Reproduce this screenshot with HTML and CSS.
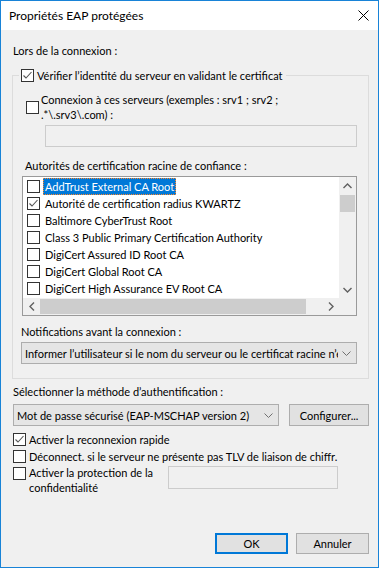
FILE: index.html
```html
<!doctype html>
<html lang="fr">
  <head>
    <meta charset="UTF-8" />
    <title>Propriétés EAP protégées</title>
    <link rel="stylesheet" href="styles.css">
  </head>
  <body>
    <div class="window">
      <div class="titlebar">
        <span class="title">Propriétés EAP protégées</span>
        <svg class="close" width="11" height="11" viewBox="0 0 11 11">
          <path d="M0.5 0.5 L10.5 10.5 M10.5 0.5 L0.5 10.5" stroke="#000" stroke-width="1" fill="none" />
        </svg>
      </div>

      <div class="content">
        <div class="label">Lors de la connexion :</div>

        <fieldset class="group">
          <legend class="check-row">
            <span class="cb checked"><svg width="11" height="11" viewBox="0 0 11 11"><path d="M1.5 5.5 L4 8 L9.5 2" stroke="#555" stroke-width="1.1" fill="none" /></svg></span>
            <span>Vérifier l’identité du serveur en validant le certificat</span>
          </legend>

          <div class="check-row servers">
            <span class="cb"></span>
            <span>Connexion à ces serveurs (exemples : srv1 ; srv2 ;<br>.*\.srv3\.com) :</span>
          </div>
          <div class="textbox servers-box"></div>

          <div class="label ca-label">Autorités de certification racine de confiance :</div>
          <div class="listbox">
            <div class="list-main">
              <div class="rows">
                <div class="row"><span class="cb"></span><span class="item selected">AddTrust External CA Root</span></div>
                <div class="row"><span class="cb checked"><svg width="11" height="11" viewBox="0 0 11 11"><path d="M1.5 5.5 L4 8 L9.5 2" stroke="#555" stroke-width="1.1" fill="none" /></svg></span><span class="item">Autorité de certification radius KWARTZ</span></div>
                <div class="row"><span class="cb"></span><span class="item">Baltimore CyberTrust Root</span></div>
                <div class="row"><span class="cb"></span><span class="item">Class 3 Public Primary Certification Authority</span></div>
                <div class="row"><span class="cb"></span><span class="item">DigiCert Assured ID Root CA</span></div>
                <div class="row"><span class="cb"></span><span class="item">DigiCert Global Root CA</span></div>
                <div class="row"><span class="cb"></span><span class="item">DigiCert High Assurance EV Root CA</span></div>
              </div>
              <div class="vscroll">
                <div class="arrow"><svg width="9" height="6" viewBox="0 0 9 6"><path d="M0.5 5 L4.5 1 L8.5 5" stroke="#606060" stroke-width="1.4" fill="none" /></svg></div>
                <div class="vthumb"></div>
                <div class="arrow bottom"><svg width="9" height="6" viewBox="0 0 9 6"><path d="M0.5 1 L4.5 5 L8.5 1" stroke="#606060" stroke-width="1.4" fill="none" /></svg></div>
              </div>
            </div>
            <div class="hscroll-row">
              <div class="hscroll">
                <div class="arrow"><svg width="6" height="9" viewBox="0 0 6 9"><path d="M5 0.5 L1 4.5 L5 8.5" stroke="#606060" stroke-width="1.4" fill="none" /></svg></div>
                <div class="hthumb"></div>
                <div class="arrow right"><svg width="6" height="9" viewBox="0 0 6 9"><path d="M1 0.5 L5 4.5 L1 8.5" stroke="#606060" stroke-width="1.4" fill="none" /></svg></div>
              </div>
              <div class="corner"></div>
            </div>
          </div>

          <div class="label notif-label">Notifications avant la connexion :</div>
          <div class="combo notif-combo">
            <span class="combo-text">Informer l’utilisateur si le nom du serveur ou le certificat racine n’est pas autorisé</span>
            <svg class="chevron" width="9" height="5" viewBox="0 0 9 5"><path d="M0.5 0.5 L4.5 4.5 L8.5 0.5" stroke="#707070" stroke-width="1" fill="none" /></svg>
          </div>
        </fieldset>

        <div class="label method-label">Sélectionner la méthode d’authentification :</div>
        <div class="method-row">
          <div class="combo method-combo">
            <span class="combo-text">Mot de passe sécurisé (EAP-MSCHAP version 2)</span>
            <svg class="chevron" width="9" height="5" viewBox="0 0 9 5"><path d="M0.5 0.5 L4.5 4.5 L8.5 0.5" stroke="#707070" stroke-width="1" fill="none" /></svg>
          </div>
          <button class="btn configure">Configurer...</button>
        </div>

        <div class="options">
          <div class="check-row opt">
            <span class="cb checked"><svg width="11" height="11" viewBox="0 0 11 11"><path d="M1.5 5.5 L4 8 L9.5 2" stroke="#555" stroke-width="1.1" fill="none" /></svg></span>
            <span>Activer la reconnexion rapide</span>
          </div>
          <div class="check-row opt">
            <span class="cb"></span>
            <span>Déconnect. si le serveur ne présente pas TLV de liaison de chiffr.</span>
          </div>
          <div class="check-row opt privacy">
            <span class="cb"></span>
            <span class="privacy-text">Activer la protection de la<br>confidentialité</span>
            <div class="textbox privacy-box"></div>
          </div>
        </div>

        <div class="buttons">
          <button class="btn default">OK</button>
          <button class="btn">Annuler</button>
        </div>
      </div>
    </div>
  </body>
</html>
```

FILE: styles.css
```css
* {
  margin: 0;
  padding: 0;
  box-sizing: border-box;
}

body {
  font-family: Lato, 'Liberation Sans', Arial, sans-serif;
  font-size: 11px;
  line-height: 15px;
  color: #000;
  background: #fff;
}

.window {
  width: 379px;
  height: 568px;
  border: 1px solid #1883d7;
  background: #f0f0f0;
  display: flex;
  flex-direction: column;
}

/* barre de titre */
.titlebar {
  height: 29px;
  background: #fff;
  display: flex;
  align-items: center;
  justify-content: space-between;
  padding-left: 8px;
  padding-right: 9px;
}

.title {
  font-size: 12px;
}

.close {
  display: block;
}

.content {
  flex: 1;
  display: flex;
  flex-direction: column;
  padding: 13px 9px 13px 11px;
}

.label {
  white-space: nowrap;
  padding-left: 1px;
}

/* cases a cocher */
.cb {
  flex: none;
  width: 13px;
  height: 13px;
  border: 1px solid #333;
  background: #fff;
  display: flex;
  align-items: center;
  justify-content: center;
}

.cb svg {
  display: block;
}

.check-row {
  display: flex;
  align-items: center;
  gap: 3px;
  white-space: nowrap;
}

/* groupe */
.group {
  margin-top: 10px;
  border: 1px solid #dcdcdc;
  padding: 0 11px 14px 8px;
  min-width: 0;
}

.group legend {
  margin-left: -2px;
  padding: 0 3px 0 2px;
  height: 15px;
}

.servers {
  margin-top: 9px;
  margin-left: 5px;
  gap: 2px;
}

.textbox {
  height: 22px;
  border: 1px solid #cccccc;
  background: #f0f0f0;
}

.servers-box {
  margin-top: 3px;
  margin-left: 24px;
}

.ca-label {
  margin-top: 11px;
  margin-left: 3px;
}

/* liste des autorites */
.listbox {
  margin-top: 3px;
  margin-left: 1px;
  border: 1px solid #9a9a9a;
  background: #fff;
}

.list-main {
  display: flex;
  height: 121px;
}

.rows {
  flex: 1;
  padding-top: 1px;
  overflow: hidden;
}

.row {
  height: 17px;
  display: flex;
  align-items: center;
  padding-left: 4px;
  white-space: nowrap;
}

.item {
  margin-left: 3px;
  padding: 0 2px;
  line-height: 17px;
  height: 17px;
}

.item.selected {
  background: #0078d7;
  color: #fff;
  outline: 1px dotted #ff8728;
  outline-offset: -1px;
}

.vscroll {
  width: 17px;
  background: #f0f0f0;
  display: flex;
  flex-direction: column;
}

.arrow {
  flex: none;
  width: 17px;
  height: 17px;
  display: flex;
  align-items: center;
  justify-content: center;
}

.vscroll .bottom {
  margin-top: auto;
}

.vthumb {
  margin: 1px 1px 0;
  height: 17px;
  background: #cdcdcd;
}

.hscroll-row {
  display: flex;
  height: 17px;
}

.hscroll {
  flex: 1;
  display: flex;
  background: #f0f0f0;
}

.hthumb {
  width: 266px;
  margin: 1px 0;
  background: #cdcdcd;
}

.hscroll .right {
  margin-left: auto;
}

.corner {
  width: 17px;
  background: #f0f0f0;
}

/* listes deroulantes */
.combo {
  height: 22px;
  border: 1px solid #adadad;
  background: #e5e5e5;
  display: flex;
  align-items: center;
  padding-left: 3px;
  white-space: nowrap;
}

.combo-text {
  flex: 1;
  overflow: hidden;
}

.chevron {
  flex: none;
  margin: 0 5px 0 4px;
}

.notif-label {
  margin-top: 8px;
  padding-left: 0;
}

.notif-combo {
  margin-top: 3px;
}

.method-label {
  margin-top: 5px;
}

.method-row {
  margin-top: 5px;
  display: flex;
  gap: 10px;
}

.method-combo {
  margin-left: 1px;
  width: 267px;
}

.btn {
  font: inherit;
  color: #000;
  height: 21px;
  width: 73px;
  border: 1px solid #adadad;
  background: #e1e1e1;
}

.configure {
  width: 80px;
  height: 22px;
}

/* options */
.options {
  margin-top: 5px;
}

.opt {
  height: 17px;
  margin-left: 1px;
}

.privacy {
  height: auto;
  margin-top: 0;
  align-items: flex-start;
}

.privacy .cb {
  margin-top: 2px;
}

.privacy-text {
  width: 136px;
}

.privacy-box {
  margin-top: 1px;
  width: 170px;
  height: 23px;
}

.buttons {
  margin-top: auto;
  display: flex;
  justify-content: flex-end;
  gap: 8px;
}

.btn.default {
  border: 2px solid #0078d7;
}
```
